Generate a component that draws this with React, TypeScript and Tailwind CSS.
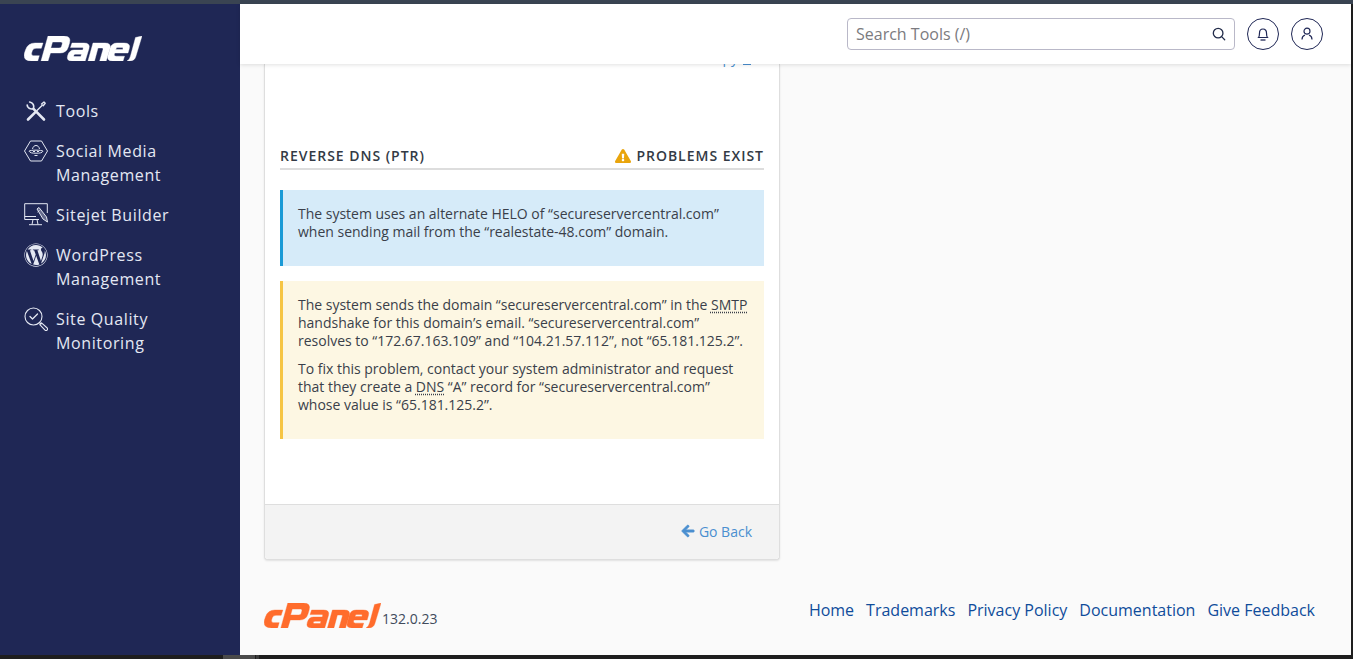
import React from "react";
import { FaWordpress, FaExclamationTriangle, FaArrowLeft } from "react-icons/fa";

const font = { fontFamily: '"Open Sans", sans-serif' };

function Logo({ className }: { className: string }) {
  return (
    <svg viewBox="0 0 118 25" className={className} fill="currentColor" fillRule="evenodd" stroke="currentColor" strokeWidth=".4">
      <path d="M11 7H19L17.300 12.300H12Q9.300 12.300 8.400 14.500L7.600 17Q7 19.700 9.500 19.700H15.300L13.700 25H7.500Q-1.500 25 .5 17L1.500 14Q3.800 7 11 7Z" />
      <path d="M24 0H40Q47.500 0 45.500 7L44.300 11Q42.500 17 36 17H26.500L24 25H17L24 0ZM28.500 6 26.800 12H35Q37 12 37.500 10.400L38.300 7.800Q38.700 6 37 6Z" />
      <path d="M48 7H60Q66.500 7 65 12.500L61.200 25H48Q42 25 43.700 19.500 45.300 14 50 14H58.800L59.200 12.400Q59.500 11.600 58.300 11.600H46.500ZM51.500 18.200Q50 18.200 49.700 19.400 49.400 20.600 51 20.600H56.800L57.500 18.200Z" />
      <path d="M69 7H81Q87.500 7 86 12.500L82.200 25H75.700L79 13.400Q79.500 12 78 12H74L70.500 25H64Z" />
      <path d="M93 7H100Q107 7 105.300 12.500L104 17H90.700L90.300 18.400Q89.800 20.200 92 20.200H100.500L99 25H88.500Q82.500 25 84 19.500L86 12.500Q87.500 7 93 7ZM93.500 11.600Q92.300 11.600 92 12.800L91.700 13.500H98.800L99 12.800Q99.300 11.600 98 11.600Z" />
      <path d="M111.500 1.500 118 0 111.800 20.500Q110.500 25 105.500 25H103Q105.500 24 106.500 20Z" />
    </svg>
  );
}

function ToolsIcon() {
  return (
    <svg viewBox="0 0 24 24" className="w-6 h-6 shrink-0" fill="none" stroke="currentColor" strokeLinecap="round" strokeLinejoin="round">
      <path d="M20 20.500 9.500 9.800" strokeWidth="2.600" />
      <path d="M3.200 6c0 3 3 4.500 6.300 3.800 1-3.300-.5-6.300-3.800-6.800" strokeWidth="1.700" />
      <path d="M4 20.500 11.200 13.300" strokeWidth="2.600" />
      <path d="M13 11.500 18.500 6" strokeWidth="1.400" />
      <path d="M17.500 5 20 3l1.200 1.200-2 2.500" strokeWidth="1.400" />
    </svg>
  );
}
function HexIcon() {
  return (
    <svg viewBox="0 0 24 24" className="w-6 h-6 shrink-0" fill="none" stroke="currentColor" strokeWidth="1" strokeLinejoin="round">
      <path d="M6.500 2h11L23.500 12l-6 10h-11L.5 12Z" />
      <path d="M8.500 10c.5-2.500 2-3.500 3.500-3.500s3 1 3.500 3.500" />
      <path d="M5 12.200c1.500-1.400 12.500-1.400 14 0-1 1.800-3.500 2-7 2s-6-.2-7-2Z" />
      <path d="M9 12.500h2M13 12.500h2M10.500 16.500h3" />
    </svg>
  );
}
function SitejetIcon() {
  return (
    <svg viewBox="0 0 24 24" className="w-6 h-6 shrink-0" fill="none" stroke="currentColor" strokeWidth="1">
      <path d="M15 16.500H.7V.7h22.600V10" />
      <path d="M.7 13.500H12" />
      <path d="M9 16.500 8 21.500M13 16.500l1 5M5 21.700h13" />
      <path d="m13 6 2-1.500 7.500 9.500 1 5-4.500-3Z" fill="currentColor" fillOpacity=".35" />
      <path d="m15.500 7.500-2 1.600" />
    </svg>
  );
}
function QualityIcon() {
  return (
    <svg viewBox="0 0 24 24" className="w-6 h-6 shrink-0" fill="none" stroke="currentColor" strokeWidth="1.100" strokeLinecap="round" strokeLinejoin="round">
      <circle cx="9.500" cy="9.500" r="8.500" />
      <path d="m6 9.500 2.500 2.500 5-5" strokeWidth="1.300" />
      <path d="M15.500 15.500 17 17" />
      <path d="m17.500 15.800 5.700 5.200c.8 1 .2 1.800-.2 2.200-.5.500-1.300.6-2 0l-5.200-5.600Z" />
    </svg>
  );
}

function NavItem({ icon, lines }: { icon: React.ReactNode; lines: string[] }) {
  return (
    <li className="flex gap-2 pl-6 pr-4 py-2 text-[#e4e8f3] text-[16px] leading-6 tracking-[0.62px]">
      <span className="w-6 h-6 flex items-center">{icon}</span>
      <span>
        {lines.map((l) => (
          <span key={l} className="block">{l}</span>
        ))}
      </span>
    </li>
  );
}

function Abbr({ children }: { children: React.ReactNode }) {
  return <span className="underline decoration-dotted underline-offset-2">{children}</span>;
}

export default function App() {
  return (
    <div style={font} className="w-[1353px] h-[659px] overflow-hidden bg-[#1e1e1e] flex flex-col">
      <div className="h-1 bg-[#3a4452] shrink-0" />
      <div className="h-[651px] flex pr-[2px] shrink-0">
        <aside className="w-60 shrink-0 bg-[#1f2755] text-white">
          <div className="pl-6 pt-8 h-[87px]">
            <Logo className="w-[118px] h-[25px] text-white" />
          </div>
          <ul className="flex flex-col">
            <NavItem icon={<ToolsIcon />} lines={["Tools"]} />
            <NavItem icon={<HexIcon />} lines={["Social Media", "Management"]} />
            <NavItem icon={<SitejetIcon />} lines={["Sitejet Builder"]} />
            <NavItem icon={<FaWordpress className="w-6 h-6" />} lines={["WordPress", "Management"]} />
            <NavItem icon={<QualityIcon />} lines={["Site Quality", "Monitoring"]} />
          </ul>
        </aside>
        <main className="flex-1 flex flex-col bg-[#fafafa] min-w-0">
          <header className="relative z-10 h-[60px] shrink-0 bg-white shadow-[0_1px_4px_rgba(0,0,0,0.12)] flex items-center justify-end pr-[28px]">
            <div className="w-[388px] h-8 rounded border border-[#b9b8c8] flex items-center pl-2 pr-[8px] text-[16px] text-[#7b7b80] mr-3">
              <span className="flex-1">Search Tools (/)</span>
              <svg viewBox="0 0 16 16" className="w-[14px] h-[14px] text-[#222c4a]" fill="none" stroke="currentColor" strokeWidth="1.500" strokeLinecap="round">
                <circle cx="7" cy="7" r="5.500" />
                <path d="m11 11 3.500 3.500" />
              </svg>
            </div>
            <button className="w-8 h-8 rounded-full border border-[#1f2755] flex items-center justify-center mr-[12px]">
              <svg viewBox="0 0 14 14" className="w-[14px] h-[14px] text-[#1f2755]" fill="none" stroke="currentColor" strokeWidth="1.200">
                <path d="M2.500 10.500h9c-.8-1-1-2-1-4.500C10.500 3.500 9 2 7 2S3.500 3.500 3.500 6c0 2.500-.2 3.500-1 4.500Z" />
                <path d="M4.500 13h5" strokeWidth="1.300" />
              </svg>
            </button>
            <button className="w-8 h-8 rounded-full border border-[#1f2755] flex items-center justify-center">
              <svg viewBox="0 0 14 14" className="w-[14px] h-[14px] text-[#1f2755]" fill="none" stroke="currentColor" strokeWidth="1.200">
                <circle cx="7" cy="4.200" r="3" />
                <path d="M2 12.500c0-2.500 1.500-4 3-4.500M12 12.500c0-2.500-1.500-4-3-4.500" />
              </svg>
            </button>
          </header>
          <div className="flex-1 overflow-hidden pl-[24px] flex flex-col">
            <section className="w-[516px] h-[496px] shrink-0 bg-white border border-t-0 border-[#dedede] rounded-b shadow-[0_1px_2px_rgba(0,0,0,0.1)] flex flex-col">
              <div className="h-0 relative">
                <span className="absolute right-[28px] top-[-15px] text-[14px] leading-[18px] text-[#4a8fd0] flex items-center gap-[5px]">Copy <span className="inline-block w-[8px] h-[14px] border border-[#4a8fd0]" /></span>
              </div>
              <div className="flex-1 px-[15px] pt-[81px] text-[14px] leading-[18px] text-[#3a3f4a] tracking-[-0.01px]">
                <div className="flex items-center justify-between h-[25px] border-b-2 border-[#dddddd] text-[14px] font-semibold tracking-[0.98px] text-[#333a45] pb-[1px]">
                  <span>REVERSE DNS (PTR)</span>
                  <span className="flex items-center gap-[5px]">
                    <FaExclamationTriangle className="w-4 h-4 text-[#e9a50d]" />
                    PROBLEMS EXIST
                  </span>
                </div>
                <div className="mt-[20px] h-[76px] bg-[#d6ebf9] border-l-[3px] border-[#1a9ad6] pl-[15px] pr-[15px] pt-[15px]">
                  <p>The system uses an alternate HELO of “secureservercentral.com” when sending mail from the “realestate-48.com” domain.</p>
                </div>
                <div className="mt-[15px] h-[158px] bg-[#fdf7e3] border-l-[3px] border-[#f6c544] pl-[15px] pr-[15px] pt-[15px]">
                  <p className="mb-[10px]">The system sends the domain “secureservercentral.com” in the <Abbr>SMTP</Abbr> handshake for this domain’s email. “secureservercentral.com” resolves to “172.67.163.109” and “104.21.57.112”, not “65.181.125.2”.</p>
                  <p>To fix this problem, contact your system administrator and request that they create a <Abbr>DNS</Abbr> “A” record for “secureservercentral.com” whose value is “65.181.125.2”.</p>
                </div>
              </div>
              <div className="h-[55px] shrink-0 bg-[#f3f3f3] border-t border-[#dedede] rounded-b flex items-center justify-end pr-[27px] pb-[2px] text-[14px] text-[#4a8fd0] gap-1">
                <FaArrowLeft className="w-[14px] h-[14px] stroke-current stroke-[30]" />
                Go Back
              </div>
            </section>
            <footer className="flex items-end justify-between pr-[36px] mt-[38px]">
              <div className="flex items-end">
                <Logo className="w-[117px] h-[25px] text-[#ff6c2c]" />
                <span className="text-[14px] leading-[18px] text-[#414b5c] ml-[1px]">132.0.23</span>
              </div>
              <nav className="flex gap-3 text-[16px] leading-6 text-[#0f4c9a] mb-[6px]">
                <span>Home</span>
                <span>Trademarks</span>
                <span>Privacy Policy</span>
                <span>Documentation</span>
                <span>Give Feedback</span>
              </nav>
            </footer>
          </div>
        </main>
      </div>
      <div className="flex h-1 shrink-0">
        <div className="ml-[223px] w-[32px] bg-[#4a4a4a]" />
        <div className="ml-px w-[3px] bg-[#3a3a3a]" />
      </div>
    </div>
  );
}
